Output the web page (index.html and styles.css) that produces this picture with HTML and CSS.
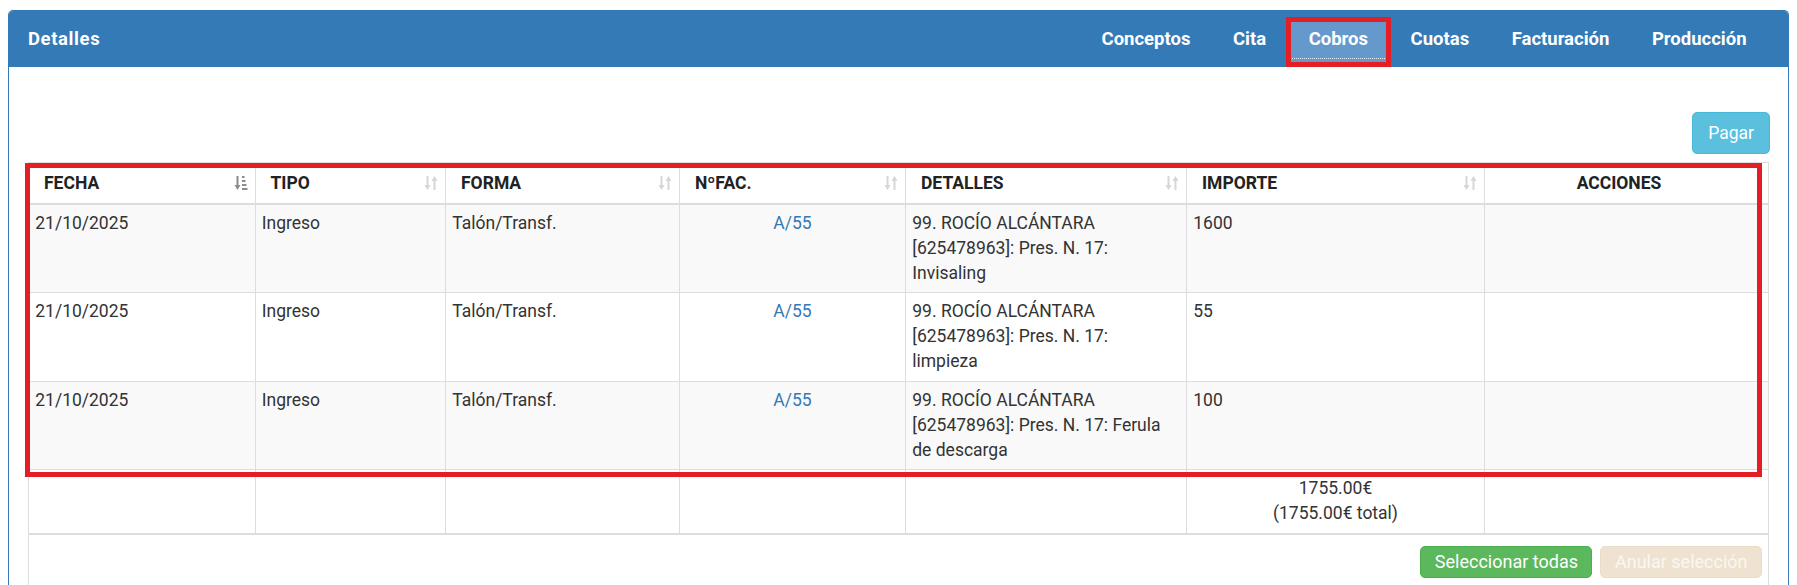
FILE: index.html
```html
<!DOCTYPE html>
<html lang="es">
<head>
<meta charset="utf-8">
<title>Detalles</title>
<link rel="stylesheet" href="styles.css">
</head>
<body>
<div class="page">
  <div class="panel">
    <div class="panel-heading">
      <h3 class="panel-title">Detalles</h3>
      <ul class="tabs">
        <li><a href="#">Conceptos</a></li>
        <li><a href="#">Cita</a></li>
        <li class="active"><a href="#">Cobros</a><span class="annot annot-tab"></span></li>
        <li><a href="#">Cuotas</a></li>
        <li><a href="#">Facturación</a></li>
        <li><a href="#">Producción</a></li>
      </ul>
    </div>
    <div class="panel-body">
      <div class="toolbar">
        <button class="btn btn-info" type="button">Pagar</button>
      </div>
      <div class="table-wrap">
        <span class="annot annot-table"></span>
        <table class="grid">
          <colgroup>
            <col class="c1"><col class="c2"><col class="c3"><col class="c4"><col class="c5"><col class="c6"><col class="c7">
          </colgroup>
          <thead>
            <tr>
              <th><div class="th-in"><span>FECHA</span><svg class="sort sort-active" viewBox="0 0 14 16" width="14" height="16"><path d="M3.5 1v10" stroke="currentColor" stroke-width="2"/><path d="M0.5 10h6l-3 5z" fill="currentColor"/><rect x="8" y="1" width="2.5" height="2" fill="currentColor"/><rect x="8" y="5" width="3.5" height="2" fill="currentColor"/><rect x="8" y="9" width="4.5" height="2" fill="currentColor"/><rect x="8" y="13" width="5.5" height="2" fill="currentColor"/></svg></div></th>
              <th><div class="th-in"><span>TIPO</span><svg class="sort" viewBox="0 0 14 16" width="14" height="16"><path d="M3.5 1v10" stroke="currentColor" stroke-width="2"/><path d="M0.5 10h6l-3 5z" fill="currentColor"/><path d="M10.5 15V5" stroke="currentColor" stroke-width="2"/><path d="M7.5 6h6l-3-5z" fill="currentColor"/></svg></div></th>
              <th><div class="th-in"><span>FORMA</span><svg class="sort" viewBox="0 0 14 16" width="14" height="16"><path d="M3.5 1v10" stroke="currentColor" stroke-width="2"/><path d="M0.5 10h6l-3 5z" fill="currentColor"/><path d="M10.5 15V5" stroke="currentColor" stroke-width="2"/><path d="M7.5 6h6l-3-5z" fill="currentColor"/></svg></div></th>
              <th><div class="th-in"><span>NºFAC.</span><svg class="sort" viewBox="0 0 14 16" width="14" height="16"><path d="M3.5 1v10" stroke="currentColor" stroke-width="2"/><path d="M0.5 10h6l-3 5z" fill="currentColor"/><path d="M10.5 15V5" stroke="currentColor" stroke-width="2"/><path d="M7.5 6h6l-3-5z" fill="currentColor"/></svg></div></th>
              <th><div class="th-in"><span>DETALLES</span><svg class="sort" viewBox="0 0 14 16" width="14" height="16"><path d="M3.5 1v10" stroke="currentColor" stroke-width="2"/><path d="M0.5 10h6l-3 5z" fill="currentColor"/><path d="M10.5 15V5" stroke="currentColor" stroke-width="2"/><path d="M7.5 6h6l-3-5z" fill="currentColor"/></svg></div></th>
              <th><div class="th-in"><span>IMPORTE</span><svg class="sort" viewBox="0 0 14 16" width="14" height="16"><path d="M3.5 1v10" stroke="currentColor" stroke-width="2"/><path d="M0.5 10h6l-3 5z" fill="currentColor"/><path d="M10.5 15V5" stroke="currentColor" stroke-width="2"/><path d="M7.5 6h6l-3-5z" fill="currentColor"/></svg></div></th>
              <th class="th-center">ACCIONES</th>
            </tr>
          </thead>
          <tbody>
            <tr>
              <td>21/10/2025</td>
              <td>Ingreso</td>
              <td>Talón/Transf.</td>
              <td class="center"><a href="#" class="link">A/55</a></td>
              <td>99. ROCÍO ALCÁNTARA [625478963]: Pres. N. 17: Invisaling</td>
              <td>1600</td>
              <td></td>
            </tr>
            <tr>
              <td>21/10/2025</td>
              <td>Ingreso</td>
              <td>Talón/Transf.</td>
              <td class="center"><a href="#" class="link">A/55</a></td>
              <td>99. ROCÍO ALCÁNTARA [625478963]: Pres. N. 17:<br>limpieza</td>
              <td>55</td>
              <td></td>
            </tr>
            <tr>
              <td>21/10/2025</td>
              <td>Ingreso</td>
              <td>Talón/Transf.</td>
              <td class="center"><a href="#" class="link">A/55</a></td>
              <td>99. ROCÍO ALCÁNTARA [625478963]: Pres. N. 17: Ferula de descarga</td>
              <td>100</td>
              <td></td>
            </tr>
          </tbody>
          <tfoot>
            <tr>
              <td></td>
              <td></td>
              <td></td>
              <td></td>
              <td></td>
              <td class="center">1755.00€<br>(1755.00€ total)</td>
              <td></td>
            </tr>
          </tfoot>
        </table>
        <div class="table-actions">
          <button class="btn btn-sm btn-success" type="button">Seleccionar todas</button>
          <button class="btn btn-sm btn-warning" type="button" disabled>Anular selección</button>
        </div>
      </div>
    </div>
  </div>
</div>
</body>
</html>
```

FILE: styles.css
```css
* {
  box-sizing: border-box;
}

html, body {
  margin: 0;
  height: 585px;
  overflow: hidden;
}

body {
  font-family: Roboto, "Liberation Sans", Arial, sans-serif;
  font-size: 17.5px;
  line-height: 25px;
  color: #333;
  background: #fff;
}

.page {
  padding: 10px 8px 0;
  height: 585px;
}

.panel {
  border: 1px solid #337ab7;
  border-bottom: none;
  border-radius: 5px 5px 0 0;
  height: 600px;
}

.panel-heading {
  background: #337ab7;
  height: 56px;
  display: flex;
  align-items: flex-start;
  padding: 11px 24px 0 19px;
  color: #fff;
  border-radius: 4px 4px 0 0;
}

.panel-title {
  margin: 5px 0 0;
  font-size: 18.5px;
  font-weight: 700;
  line-height: 25px;
  letter-spacing: 0.6px;
}

.tabs {
  list-style: none;
  margin: 0 0 0 auto;
  padding: 0;
  display: flex;
  gap: 7.5px;
}

.tabs li {
  position: relative;
}

.tabs a {
  position: relative;
  display: block;
  height: 40px;
  padding: 5px 17.5px 0;
  font-size: 18.5px;
  font-weight: 700;
  line-height: 25px;
  color: #fff;
  text-decoration: none;
}

.tabs li.active a {
  background: #6699cb;
}

.tabs li.active a::after {
  content: "";
  position: absolute;
  left: 1px;
  right: 1px;
  bottom: 3px;
  border-top: 1px dotted rgba(255, 255, 255, 0.85);
}

.annot {
  position: absolute;
  border: 5px solid #e41e25;
  pointer-events: none;
  z-index: 5;
}

.annot-tab {
  left: -5px;
  top: -5px;
  right: -5px;
  bottom: -5px;
}

.panel-body {
  padding: 45px 19px 0;
}

.toolbar {
  display: flex;
  justify-content: flex-end;
  margin-bottom: 8px;
}

.btn {
  font-family: inherit;
  border: 1px solid transparent;
  border-radius: 5px;
  color: #fff;
  white-space: nowrap;
}

.btn-info {
  background: #5bc0de;
  border-color: #46b8da;
  height: 42px;
  padding: 0 15px;
  font-size: 17.5px;
  line-height: 40px;
  margin-right: -1px;
}

.table-wrap {
  position: relative;
  border: 1px solid #ddd;
  height: 500px;
}

.annot-table {
  left: -4px;
  top: 0;
  width: 1737px;
  height: 314px;
}

.grid {
  width: 100%;
  border-collapse: collapse;
  table-layout: fixed;
  border-style: hidden;
}

.c1 { width: 226px; }
.c2 { width: 190.5px; }
.c3 { width: 234px; }
.c4 { width: 226px; }
.c5 { width: 281px; }
.c6 { width: 298px; }

.grid th,
.grid td {
  border: 1px solid #ddd;
  padding: 6.25px;
  vertical-align: top;
  text-align: left;
}

.grid thead th {
  border-bottom: 2.5px solid #ddd;
  font-weight: 700;
  color: #222;
  padding: 7.5px 7px 7px 15px;
  vertical-align: bottom;
}

.grid thead th.th-center {
  text-align: center;
  padding-right: 30px;
}

.th-in {
  display: flex;
  align-items: center;
  justify-content: space-between;
}

.sort {
  flex: none;
  color: #d6d6d6;
}

.sort-active {
  color: #8c8c8c;
}

.grid tbody tr:nth-child(odd) td {
  background: #f9f9f9;
}

.grid .center {
  text-align: center;
}

.link {
  color: #337ab7;
  text-decoration: none;
}

.table-actions {
  border-top: 2px solid #ddd;
  display: flex;
  justify-content: flex-end;
  gap: 8px;
  padding: 11px 6px 0;
}

.btn-sm {
  height: 32px;
  padding: 0 13.5px;
  font-size: 18px;
  line-height: 30px;
}

.btn-success {
  background: #5cb85c;
  border-color: #4cae4c;
}

.btn-warning[disabled] {
  background: #efe2d0;
  border-color: #ebdcc7;
  color: #fbf7f1;
}
```
